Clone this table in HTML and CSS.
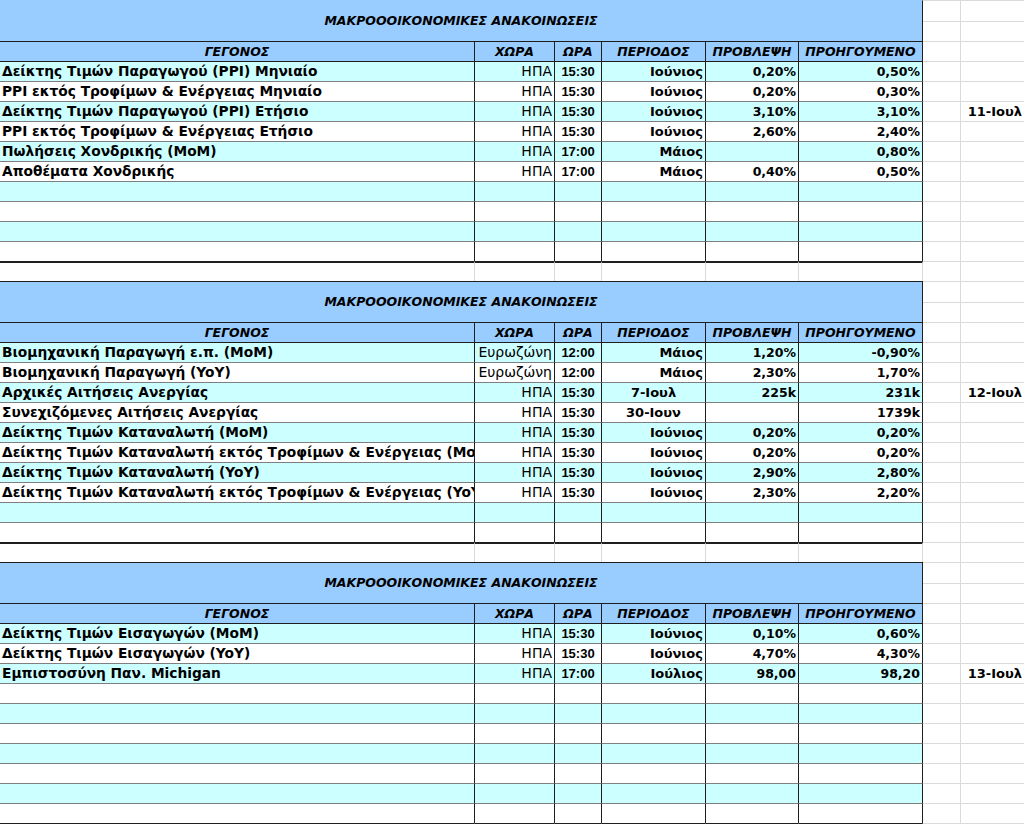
FILE: index.html
```html
<!DOCTYPE html>
<html lang="el">
<head>
<meta charset="utf-8">
<title>Μακροοικονομικές ανακοινώσεις</title>
<link rel="stylesheet" href="styles.css">
</head>
<body>
<div class="sheet">

  <!-- TABLE 1 -->
  <div class="title top">
    <div class="tcell">ΜΑΚΡΟΟΟΙΚΟΝΟΜΙΚΕΣ ΑΝΑΚΟΙΝΩΣΕΙΣ</div>
    <div class="x g1"></div><div class="x h1"></div>
    <div class="x g2"></div><div class="x h2"></div>
  </div>
  <div class="row head">
    <div class="c hd">ΓΕΓΟΝΟΣ</div><div class="c hd">ΧΩΡΑ</div><div class="c hd">ΩΡΑ</div><div class="c hd">ΠΕΡΙΟΔΟΣ</div><div class="c hd">ΠΡΟΒΛΕΨΗ</div><div class="c hd">ΠΡΟΗΓΟΥΜΕΝΟ</div><div class="x"></div><div class="x"></div>
  </div>
  <div class="row cy first">
    <div class="c ev">Δείκτης Τιμών Παραγωγού (PPI) Μηνιαίο</div><div class="c cty">ΗΠΑ</div><div class="c tm">15:30</div><div class="c per">Ιούνιος</div><div class="c num">0,20%</div><div class="c num">0,50%</div><div class="x"></div><div class="x"></div>
  </div>
  <div class="row">
    <div class="c ev">PPI εκτός Τροφίμων &amp; Ενέργειας Μηνιαίο</div><div class="c cty">ΗΠΑ</div><div class="c tm">15:30</div><div class="c per">Ιούνιος</div><div class="c num">0,20%</div><div class="c num">0,30%</div><div class="x"></div><div class="x"></div>
  </div>
  <div class="row cy">
    <div class="c ev">Δείκτης Τιμών Παραγωγού (PPI) Ετήσιο</div><div class="c cty">ΗΠΑ</div><div class="c tm">15:30</div><div class="c per">Ιούνιος</div><div class="c num">3,10%</div><div class="c num">3,10%</div><div class="x"></div><div class="x dt">11-Ιουλ</div>
  </div>
  <div class="row">
    <div class="c ev">PPI εκτός Τροφίμων &amp; Ενέργειας Ετήσιο</div><div class="c cty">ΗΠΑ</div><div class="c tm">15:30</div><div class="c per">Ιούνιος</div><div class="c num">2,60%</div><div class="c num">2,40%</div><div class="x"></div><div class="x"></div>
  </div>
  <div class="row cy">
    <div class="c ev">Πωλήσεις Χονδρικής (MoM)</div><div class="c cty">ΗΠΑ</div><div class="c tm">17:00</div><div class="c per">Μάιος</div><div class="c num"></div><div class="c num">0,80%</div><div class="x"></div><div class="x"></div>
  </div>
  <div class="row">
    <div class="c ev">Αποθέματα Χονδρικής</div><div class="c cty">ΗΠΑ</div><div class="c tm">17:00</div><div class="c per">Μάιος</div><div class="c num">0,40%</div><div class="c num">0,50%</div><div class="x"></div><div class="x"></div>
  </div>
  <div class="row cy"><div class="c"></div><div class="c"></div><div class="c"></div><div class="c"></div><div class="c"></div><div class="c"></div><div class="x"></div><div class="x"></div></div>
  <div class="row"><div class="c"></div><div class="c"></div><div class="c"></div><div class="c"></div><div class="c"></div><div class="c"></div><div class="x"></div><div class="x"></div></div>
  <div class="row cy"><div class="c"></div><div class="c"></div><div class="c"></div><div class="c"></div><div class="c"></div><div class="c"></div><div class="x"></div><div class="x"></div></div>
  <div class="row"><div class="c"></div><div class="c"></div><div class="c"></div><div class="c"></div><div class="c"></div><div class="c"></div><div class="x"></div><div class="x"></div></div>
  <div class="row gap"><div class="c"></div><div class="c"></div><div class="c"></div><div class="c"></div><div class="c"></div><div class="c"></div><div class="x"></div><div class="x"></div></div>

  <!-- TABLE 2 -->
  <div class="title">
    <div class="tcell">ΜΑΚΡΟΟΟΙΚΟΝΟΜΙΚΕΣ ΑΝΑΚΟΙΝΩΣΕΙΣ</div>
    <div class="x g1"></div><div class="x h1"></div>
    <div class="x g2"></div><div class="x h2"></div>
  </div>
  <div class="row head">
    <div class="c hd">ΓΕΓΟΝΟΣ</div><div class="c hd">ΧΩΡΑ</div><div class="c hd">ΩΡΑ</div><div class="c hd">ΠΕΡΙΟΔΟΣ</div><div class="c hd">ΠΡΟΒΛΕΨΗ</div><div class="c hd">ΠΡΟΗΓΟΥΜΕΝΟ</div><div class="x"></div><div class="x"></div>
  </div>
  <div class="row cy first">
    <div class="c ev">Βιομηχανική Παραγωγή ε.π. (MoM)</div><div class="c cty">Ευρωζώνη</div><div class="c tm">12:00</div><div class="c per">Μάιος</div><div class="c num">1,20%</div><div class="c num">-0,90%</div><div class="x"></div><div class="x"></div>
  </div>
  <div class="row">
    <div class="c ev">Βιομηχανική Παραγωγή (YoY)</div><div class="c cty">Ευρωζώνη</div><div class="c tm">12:00</div><div class="c per">Μάιος</div><div class="c num">2,30%</div><div class="c num">1,70%</div><div class="x"></div><div class="x"></div>
  </div>
  <div class="row cy">
    <div class="c ev">Αρχικές Αιτήσεις Ανεργίας</div><div class="c cty">ΗΠΑ</div><div class="c tm">15:30</div><div class="c per mid">7-Ιουλ</div><div class="c num">225k</div><div class="c num">231k</div><div class="x"></div><div class="x dt">12-Ιουλ</div>
  </div>
  <div class="row">
    <div class="c ev">Συνεχιζόμενες Αιτήσεις Ανεργίας</div><div class="c cty">ΗΠΑ</div><div class="c tm">15:30</div><div class="c per mid">30-Ιουν</div><div class="c num"></div><div class="c num">1739k</div><div class="x"></div><div class="x"></div>
  </div>
  <div class="row cy">
    <div class="c ev">Δείκτης Τιμών Καταναλωτή (MoM)</div><div class="c cty">ΗΠΑ</div><div class="c tm">15:30</div><div class="c per">Ιούνιος</div><div class="c num">0,20%</div><div class="c num">0,20%</div><div class="x"></div><div class="x"></div>
  </div>
  <div class="row">
    <div class="c ev">Δείκτης Τιμών Καταναλωτή εκτός Τροφίμων &amp; Ενέργειας (MoM)</div><div class="c cty">ΗΠΑ</div><div class="c tm">15:30</div><div class="c per">Ιούνιος</div><div class="c num">0,20%</div><div class="c num">0,20%</div><div class="x"></div><div class="x"></div>
  </div>
  <div class="row cy">
    <div class="c ev">Δείκτης Τιμών Καταναλωτή (YoY)</div><div class="c cty">ΗΠΑ</div><div class="c tm">15:30</div><div class="c per">Ιούνιος</div><div class="c num">2,90%</div><div class="c num">2,80%</div><div class="x"></div><div class="x"></div>
  </div>
  <div class="row">
    <div class="c ev">Δείκτης Τιμών Καταναλωτή εκτός Τροφίμων &amp; Ενέργειας (YoY)</div><div class="c cty">ΗΠΑ</div><div class="c tm">15:30</div><div class="c per">Ιούνιος</div><div class="c num">2,30%</div><div class="c num">2,20%</div><div class="x"></div><div class="x"></div>
  </div>
  <div class="row cy"><div class="c"></div><div class="c"></div><div class="c"></div><div class="c"></div><div class="c"></div><div class="c"></div><div class="x"></div><div class="x"></div></div>
  <div class="row"><div class="c"></div><div class="c"></div><div class="c"></div><div class="c"></div><div class="c"></div><div class="c"></div><div class="x"></div><div class="x"></div></div>
  <div class="row gap"><div class="c"></div><div class="c"></div><div class="c"></div><div class="c"></div><div class="c"></div><div class="c"></div><div class="x"></div><div class="x"></div></div>

  <!-- TABLE 3 -->
  <div class="title">
    <div class="tcell">ΜΑΚΡΟΟΟΙΚΟΝΟΜΙΚΕΣ ΑΝΑΚΟΙΝΩΣΕΙΣ</div>
    <div class="x g1"></div><div class="x h1"></div>
    <div class="x g2"></div><div class="x h2"></div>
  </div>
  <div class="row head">
    <div class="c hd">ΓΕΓΟΝΟΣ</div><div class="c hd">ΧΩΡΑ</div><div class="c hd">ΩΡΑ</div><div class="c hd">ΠΕΡΙΟΔΟΣ</div><div class="c hd">ΠΡΟΒΛΕΨΗ</div><div class="c hd">ΠΡΟΗΓΟΥΜΕΝΟ</div><div class="x"></div><div class="x"></div>
  </div>
  <div class="row cy first">
    <div class="c ev">Δείκτης Τιμών Εισαγωγών (MoM)</div><div class="c cty">ΗΠΑ</div><div class="c tm">15:30</div><div class="c per">Ιούνιος</div><div class="c num">0,10%</div><div class="c num">0,60%</div><div class="x"></div><div class="x"></div>
  </div>
  <div class="row">
    <div class="c ev">Δείκτης Τιμών Εισαγωγών (YoY)</div><div class="c cty">ΗΠΑ</div><div class="c tm">15:30</div><div class="c per">Ιούνιος</div><div class="c num">4,70%</div><div class="c num">4,30%</div><div class="x"></div><div class="x"></div>
  </div>
  <div class="row cy">
    <div class="c ev">Εμπιστοσύνη Παν. Michigan</div><div class="c cty">ΗΠΑ</div><div class="c tm">17:00</div><div class="c per">Ιούλιος</div><div class="c num">98,00</div><div class="c num">98,20</div><div class="x"></div><div class="x dt">13-Ιουλ</div>
  </div>
  <div class="row"><div class="c"></div><div class="c"></div><div class="c"></div><div class="c"></div><div class="c"></div><div class="c"></div><div class="x"></div><div class="x"></div></div>
  <div class="row cy"><div class="c"></div><div class="c"></div><div class="c"></div><div class="c"></div><div class="c"></div><div class="c"></div><div class="x"></div><div class="x"></div></div>
  <div class="row"><div class="c"></div><div class="c"></div><div class="c"></div><div class="c"></div><div class="c"></div><div class="c"></div><div class="x"></div><div class="x"></div></div>
  <div class="row cy"><div class="c"></div><div class="c"></div><div class="c"></div><div class="c"></div><div class="c"></div><div class="c"></div><div class="x"></div><div class="x"></div></div>
  <div class="row"><div class="c"></div><div class="c"></div><div class="c"></div><div class="c"></div><div class="c"></div><div class="c"></div><div class="x"></div><div class="x"></div></div>
  <div class="row cy"><div class="c"></div><div class="c"></div><div class="c"></div><div class="c"></div><div class="c"></div><div class="c"></div><div class="x"></div><div class="x"></div></div>
  <div class="row"><div class="c"></div><div class="c"></div><div class="c"></div><div class="c"></div><div class="c"></div><div class="c"></div><div class="x"></div><div class="x"></div></div>
  <div class="row gap"><div class="c"></div><div class="c"></div><div class="c"></div><div class="c"></div><div class="c"></div><div class="c"></div><div class="x"></div><div class="x"></div></div>
</div>
</body>
</html>
```

FILE: styles.css
```css
* { box-sizing: border-box; }

html, body {
  margin: 0;
  padding: 0;
  background: #ffffff;
  overflow: hidden;
}

.sheet {
  width: 1025px;
  display: flex;
  flex-direction: column;
  color: #000;
}

.row,
.title {
  display: grid;
  grid-template-columns: 475px 80px 47px 104px 93px 124px 38px 64px;
}

.row { height: 20px; }

.title {
  height: 41px;
  grid-template-rows: 21px 20px;
}

/* table cells (columns A-F) */
.c {
  border-top: 1px solid #7f7f7f;
  border-right: 1px solid #1e1e1e;
  background: #ffffff;
  padding: 0 2px;
  line-height: 19px;
  white-space: nowrap;
  overflow: hidden;
}

.cy .c { background: #ccffff; }

.first .c { border-top-color: #1e1e1e; }

/* spreadsheet gridline cells (columns G-H, outside the tables) */
.x {
  border-top: 1px solid #dadada;
  border-right: 1px solid #dadada;
  background: #ffffff;
  padding: 0 2px;
  line-height: 19px;
  white-space: nowrap;
  overflow: hidden;
}

/* title block */
.tcell {
  grid-column: 1 / 7;
  grid-row: 1 / 3;
  background: #99ccff;
  border-top: 1px solid #1e1e1e;
  border-right: 1px solid #1e1e1e;
  text-align: center;
  line-height: 40px;
  font-family: "DejaVu Sans", Verdana, sans-serif;
  font-weight: bold;
  font-style: italic;
  font-size: 12.5px;
}
.top .tcell { border-top-color: #99ccff; }
.g1 { grid-column: 7; grid-row: 1; }
.h1 { grid-column: 8; grid-row: 1; }
.g2 { grid-column: 7; grid-row: 2; }
.h2 { grid-column: 8; grid-row: 2; }

/* header row */
.head .c {
  background: #99ccff;
  border-top-color: #1e1e1e;
}
.hd {
  text-align: center;
  font-family: "DejaVu Sans", Verdana, sans-serif;
  font-weight: bold;
  font-style: italic;
  font-size: 12.5px;
}

/* gap rows between tables */
.gap .c {
  border-top: 2px solid #1e1e1e;
  border-right-color: #dadada;
  background: #ffffff;
}

/* data text styles */
.ev {
  font-family: "DejaVu Sans", Verdana, sans-serif;
  font-weight: bold;
  font-size: 13.75px;
  text-align: left;
}
.cty {
  font-family: "DejaVu Sans", Verdana, sans-serif;
  font-size: 14px;
  text-align: right;
}
.tm {
  font-family: "Liberation Sans", Arial, sans-serif;
  font-weight: bold;
  font-size: 13px;
  text-align: center;
}
.per {
  font-family: "DejaVu Sans", Verdana, sans-serif;
  font-weight: bold;
  font-size: 13px;
  text-align: right;
}
.per.mid { text-align: center; }
.num {
  font-family: "DejaVu Sans", Verdana, sans-serif;
  font-weight: bold;
  font-size: 12.5px;
  text-align: right;
}
.dt {
  font-family: "DejaVu Sans", Verdana, sans-serif;
  font-weight: bold;
  font-size: 13px;
  text-align: right;
  padding-right: 2px;
}
```
